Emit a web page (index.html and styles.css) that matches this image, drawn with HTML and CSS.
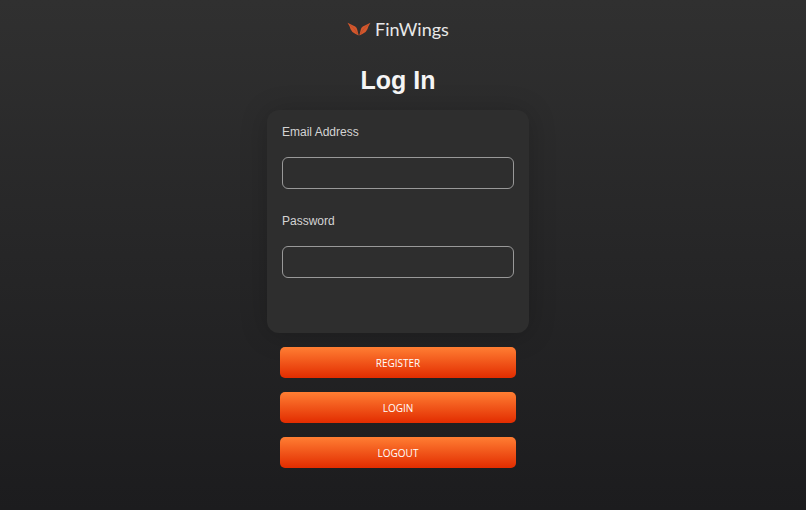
FILE: index.html
```
<!DOCTYPE html>
<html lang="en">
<head>
    <meta charset="UTF-8">
    <meta name="viewport" content="width=device-width, initial-scale=1.0">
    <title>FinWings - Log In</title>
    <link rel="stylesheet" href="styles.css">
</head>
<body>
    <header class="logo">
        <svg class="logo-icon" viewBox="0 0 24 14" aria-hidden="true">
            <path fill="#d4572c" d="M0.5 0.8 L8.2 4.6 Q9.8 5.6 10.2 7.5 L11.7 13.4 L8.6 12 L5.4 10 L3.6 7.2 L2.4 4 Z"/>
            <path fill="#d4572c" d="M23.5 0.8 L15.8 4.6 Q14.2 5.6 13.8 7.5 L12.3 13.4 L15.4 12 L18.6 10 L20.4 7.2 L21.6 4 Z"/>
            <path fill="none" stroke="#a8482a" stroke-width="0.5" d="M3 3 L7.5 7 L10.5 12 M21 3 L16.5 7 L13.5 12"/>
        </svg>
        <span class="logo-text">FinWings</span>
    </header>
    <main class="container">
        <h1>Log In</h1>
        <form id="login-form">
            <div class="card">
                <label for="email">Email Address</label>
                <input type="email" id="email" name="email">
                <label for="password">Password</label>
                <input type="password" id="password" name="password">
            </div>
            <div class="buttons">
                <button type="button">REGISTER</button>
                <button type="submit">LOGIN</button>
                <button type="button">LOGOUT</button>
            </div>
        </form>
    </main>
</body>
</html>
```

FILE: styles.css
```
* {
    box-sizing: border-box;
}

body {
    margin: 0;
    padding: 17px 10px 18px 0;
    min-height: 100vh;
    font-family: "Liberation Sans", Arial, sans-serif;
    color: #f5f5f5;
    background: linear-gradient(#303030, #1c1c1e);
}

.logo {
    display: flex;
    justify-content: center;
    align-items: center;
    gap: 4px;
    height: 24px;
}

.logo-icon {
    width: 24px;
    height: 14px;
}

.logo-text {
    font-family: Lato, sans-serif;
    font-size: 18px;
    line-height: 24px;
    color: #e8e8e8;
}

.container {
    width: 100%;
    max-width: 262px;
    margin: 0 auto;
}

h1 {
    margin: 24px 0 15px;
    font-size: 25px;
    line-height: 30px;
    text-align: center;
}

.card {
    padding: 15px 15px 55px;
    background-color: #2e2e2e;
    border-radius: 12px;
    box-shadow: 0 2px 28px rgba(0, 0, 0, 0.2);
}

label {
    display: block;
    margin-bottom: 18px;
    font-size: 12px;
    line-height: 14px;
    color: #d4d4d4;
}

.card input {
    display: block;
    width: 100%;
    height: 32px;
    padding: 0 10px;
    font-size: 12px;
    color: #f5f5f5;
    background-color: transparent;
    border: 1px solid #999;
    border-radius: 6px;
}

.card input + label {
    margin-top: 25px;
}

.buttons {
    display: flex;
    flex-direction: column;
    gap: 14px;
    padding: 14px 13px;
}

button {
    height: 31px;
    padding: 0;
    font-family: "Open Sans", sans-serif;
    font-size: 10px;
    color: #fff;
    background: linear-gradient(#ff7e33, #e22c00);
    border: none;
    border-radius: 5px;
    cursor: pointer;
}

button:hover {
    background: linear-gradient(#ff8d4a, #ee3a0c);
}
```
